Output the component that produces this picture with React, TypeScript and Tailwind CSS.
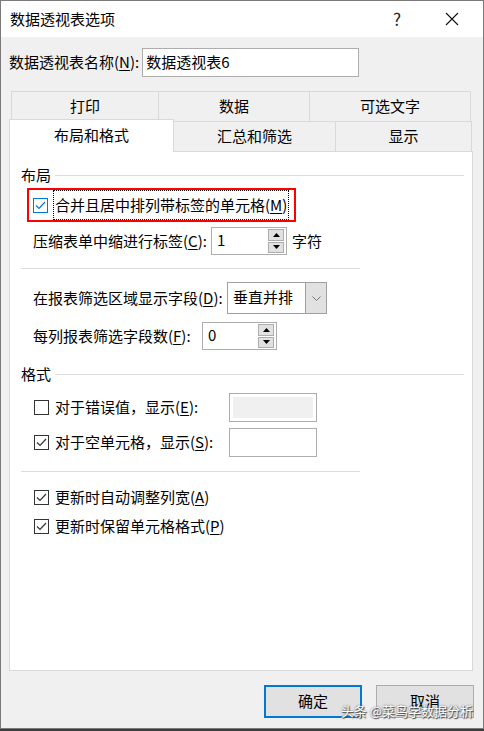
import React from 'react';

const FONT = { fontFamily: '"Microsoft YaHei UI", "Noto Sans CJK SC", "Noto Sans", sans-serif' };

function U({ c }: { c: string }) {
  return <span className="underline underline-offset-2">{c}</span>;
}

function CheckBox({ checked, focus }: { checked?: boolean; focus?: boolean }) {
  const color = focus ? '#0078d7' : '#333333';
  return (
    <div
      className="w-[15px] h-[15px] bg-white border flex items-center justify-center shrink-0"
      style={{ borderColor: color }}
    >
      {checked && (
        <svg width="11" height="9" viewBox="0 0 11 9">
          <path d="M1 4.5 L4 7.5 L10 1" fill="none" stroke={color} strokeWidth="1.2" />
        </svg>
      )}
    </div>
  );
}

function Spinner({ value, width }: { value: string; width: string }) {
  return (
    <div className={`${width} h-[28px] bg-white border border-[#adadad] flex items-stretch`}>
      <div className="flex-1 pl-[5px] pt-[1px] text-[15px] leading-[22px] text-black">{value}</div>
      <div className="w-[19px] flex flex-col gap-px p-px pr-[2px]">
        <div className="flex-1 bg-[#e1e1e1] border border-[#adadad] flex items-center justify-center">
          <svg width="7" height="4" viewBox="0 0 7 4"><path d="M0 4 L3.5 0 L7 4 Z" fill="#000" /></svg>
        </div>
        <div className="flex-1 bg-[#e1e1e1] border border-[#adadad] flex items-center justify-center">
          <svg width="7" height="4" viewBox="0 0 7 4"><path d="M0 0 L3.5 4 L7 0 Z" fill="#000" /></svg>
        </div>
      </div>
    </div>
  );
}

function GroupHeader({ title }: { title: string }) {
  return (
    <div className="h-[20px] flex items-center">
      <span className="text-[15px] leading-[20px] text-black">{title}</span>
      <div className="flex-1 h-px bg-[#dcdcdc] ml-[4px]" />
    </div>
  );
}

const TOP_TABS = [
  { label: '打印', w: 'w-[148px]' },
  { label: '数据', w: 'w-[151px]' },
  { label: '可选文字', w: 'w-[161px]' },
];

export default function App() {
  return (
    <div className="w-[484px] h-[731px] bg-[#3c3c3c] text-black" style={FONT}>
      <div className="w-[484px] h-[729px] border border-[#7a7a7a] flex flex-col">
        {/* title bar */}
        <div className="h-[36px] bg-white flex items-center shrink-0">
          <span className="pl-[9px] text-[15px] text-black">数据透视表选项</span>
          <div className="flex-1" />
          <span className="w-[30px] text-center text-[17px] text-[#222] mr-[33px]">?</span>
          <svg width="14" height="14" viewBox="0 0 14 14" className="mr-[24px]">
            <path d="M1 1 L13 13 M13 1 L1 13" stroke="#111" strokeWidth="1.1" />
          </svg>
        </div>

        <div className="flex-1 bg-[#f0f0f0] flex flex-col">
          {/* name row */}
          <div className="mt-[11px] h-[29px] flex items-center pl-[8px]">
            <span className="text-[15px]">
              数据透视表名称(<U c="N" />):
            </span>
            <div className="ml-[3px] w-[217px] h-[29px] bg-white border border-[#adadad] pl-[3px] text-[15px] leading-[26px]">
              数据透视表6
            </div>
          </div>

          {/* tabs */}
          <div className="mt-[14px] ml-[10px] flex h-[30px]">
            {TOP_TABS.map((t, i) => (
              <div
                key={t.label}
                className={`${t.w} h-[30px] border-t border-r border-[#d9d9d9] ${i === 0 ? 'border-l' : ''} flex items-center justify-center text-[15px]`}
              >
                {t.label}
              </div>
            ))}
          </div>
          <div className="ml-[8px] flex h-[30px]">
            <div className="w-[165px] h-[33px] -mt-[2px] bg-white border-t border-l border-r border-[#d9d9d9] flex items-center justify-center text-[15px] relative z-10 pb-[2px]">
              布局和格式
            </div>
            <div className="w-[162px] h-[30px] border-t border-r border-[#d9d9d9] flex items-center justify-center text-[15px]">
              汇总和筛选
            </div>
            <div className="w-[136px] h-[30px] border-t border-r border-[#d9d9d9] flex items-center justify-center text-[15px]">
              显示
            </div>
          </div>

          {/* panel */}
          <div className="mx-[8px] w-[464px] h-[520px] bg-white border border-[#d9d9d9] pt-[13px] pl-[11px] pr-[8px] flex flex-col">
            <GroupHeader title="布局" />

            <div className="mt-[3px] ml-[6px] w-[269px] h-[34px] border-2 border-[#ff0000] flex items-center pl-[4px]">
              <CheckBox checked focus />
              <div className="ml-[5px] h-[30px] border border-dotted border-black px-[1px] flex items-center text-[15px] leading-[20px]">
                合并且居中排列带标签的单元格(<U c="M" />)
              </div>
            </div>

            <div className="mt-[5px] h-[28px] flex items-center pl-[12px]">
              <span className="w-[178px] text-[15px]">
                压缩表单中缩进行标签(<U c="C" />):
              </span>
              <Spinner value="1" width="w-[76px]" />
              <span className="ml-[5px] text-[15px]">字符</span>
            </div>

            <div className="mt-[13px] w-[339px] h-px bg-[#dcdcdc]" />

            <div className="mt-[13px] h-[32px] flex items-center pl-[12px]">
              <span className="w-[194px] text-[15px]">
                在报表筛选区域显示字段(<U c="D" />):
              </span>
              <div className="w-[100px] h-[32px] bg-white border border-[#a0a0a0] flex items-stretch">
                <div className="flex-1 pl-[5px] text-[15px] leading-[28px]">垂直并排</div>
                <div className="w-[21px] bg-[#e1e1e1] border-l border-[#a0a0a0] flex items-center justify-center">
                  <svg width="9" height="5" viewBox="0 0 9 5">
                    <path d="M0.5 0.5 L4.5 4.5 L8.5 0.5" fill="none" stroke="#777" strokeWidth="1" />
                  </svg>
                </div>
              </div>
            </div>

            <div className="mt-[8px] h-[28px] flex items-center pl-[12px]">
              <span className="w-[169px] text-[15px]">
                每列报表筛选字段数(<U c="F" />):
              </span>
              <Spinner value="0" width="w-[75px]" />
            </div>

            <div className="mt-[14px]">
              <GroupHeader title="格式" />
            </div>

            <div className="mt-[9px] h-[29px] flex items-center pl-[13px]">
              <CheckBox />
              <span className="ml-[6px] w-[174px] text-[15px]">
                对于错误值，显示(<U c="E" />):
              </span>
              <div className="w-[88px] h-[29px] border border-[#adadad] bg-white p-[3px]">
                <div className="w-full h-full bg-[#f0f0f0]" />
              </div>
            </div>

            <div className="mt-[6px] h-[29px] flex items-center pl-[13px]">
              <CheckBox checked />
              <span className="ml-[6px] w-[174px] text-[15px]">
                对于空单元格，显示(<U c="S" />):
              </span>
              <div className="w-[88px] h-[29px] border border-[#adadad] bg-white" />
            </div>

            <div className="mt-[14px] w-[339px] h-px bg-[#dcdcdc]" />

            <div className="mt-[15px] h-[20px] flex items-center pl-[13px]">
              <CheckBox checked />
              <span className="ml-[6px] text-[15px]">
                更新时自动调整列宽(<U c="A" />)
              </span>
            </div>

            <div className="mt-[9px] h-[20px] flex items-center pl-[13px]">
              <CheckBox checked />
              <span className="ml-[6px] text-[15px]">
                更新时保留单元格格式(<U c="P" />)
              </span>
            </div>
          </div>

          {/* buttons */}
          <div className="mt-[14px] flex justify-end pr-[9px] gap-[14px] relative">
            <div className="w-[98px] h-[33px] bg-[#e1e1e1] border-2 border-[#0078d7] flex items-center justify-center text-[15px]">
              确定
            </div>
            <div className="w-[98px] h-[33px] bg-[#e1e1e1] border border-[#adadad] flex items-center justify-center text-[15px]">
              取消
            </div>
            <div
              className="absolute right-[10px] top-[18px] text-[13px] leading-[16px] text-white"
              style={{ textShadow: '0 0 2px #555, 1px 1px 1px #444' }}
            >
              头条 @菜鸟学数据分析
            </div>
          </div>
        </div>
      </div>
    </div>
  );
}
